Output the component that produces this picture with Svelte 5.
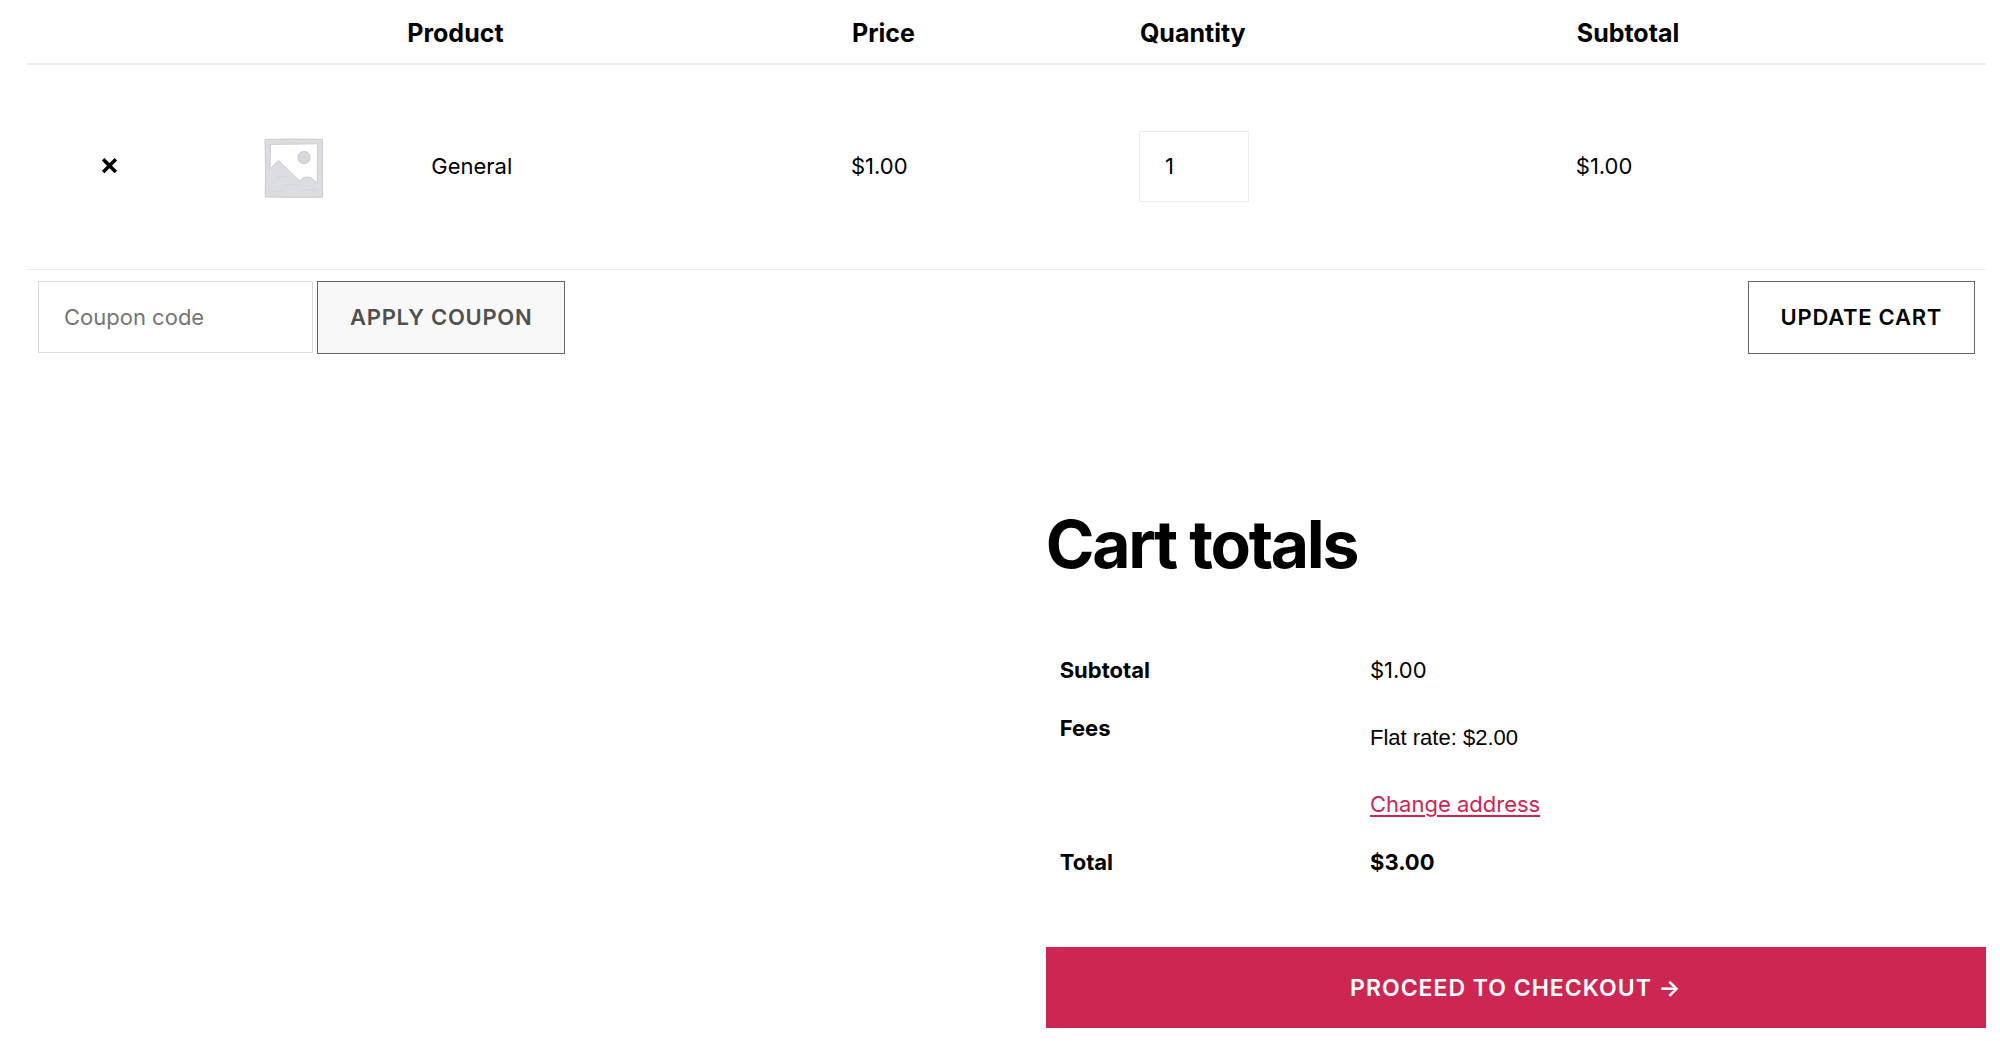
<script lang="ts">
	interface CartItem {
		id: number;
		name: string;
		price: number;
		quantity: number;
	}

	let items = $state<CartItem[]>([{ id: 1, name: 'General', price: 1, quantity: 1 }]);
	let coupon = $state('');
	const shipping = 2;

	const subtotal = $derived(items.reduce((sum, item) => sum + item.price * item.quantity, 0));

	function money(amount: number) {
		return '$' + amount.toFixed(2);
	}

	function removeItem(id: number) {
		items = items.filter(item => item.id !== id);
	}
</script>

<main class="cart">
	<form onsubmit={(e) => e.preventDefault()}>
		<table class="cart-table">
			<colgroup>
				<col class="col-remove" />
				<col class="col-thumb" />
				<col class="col-name" />
				<col class="col-price" />
				<col class="col-quantity" />
				<col />
			</colgroup>
			<thead>
				<tr>
					<td></td>
					<td></td>
					<th scope="col">Product</th>
					<th scope="col">Price</th>
					<th scope="col">Quantity</th>
					<th scope="col">Subtotal</th>
				</tr>
			</thead>
			<tbody>
				{#each items as item (item.id)}
					<tr class="item">
						<td class="remove">
							<button type="button" class="remove-btn" aria-label="Remove this item" onclick={() => removeItem(item.id)}>
								<svg width="16" height="16" viewBox="0 0 16 16" fill="none">
									<path d="M2.4 2.6L12.6 12.8M12.6 2.6L2.4 12.8" stroke="currentColor" stroke-width="3.6" stroke-linecap="square" stroke-linejoin="round" />
								</svg>
							</button>
						</td>
						<td class="thumb">
							<svg width="60" height="60" viewBox="0 0 60 60" fill="none">
								<path d="M1 1.4L30 1L58.6 1.4L58.3 30L58.6 59.2L30 59.4L1.2 58.9L1.6 30Z" fill="#dcdde1" stroke="#c9cacf" />
								<path d="M6.4 6.4L53.6 5.8L53.3 45L49.3 41.8C46 38.2 40.5 38.4 37.5 41.2L35.6 43.1L14.7 22.4L6 31Z" fill="#fff" stroke="#cbccd1" />
								<circle cx="40" cy="19.5" r="6" fill="#d7d8dc" stroke="#c5c6cb" />
								<path d="M12 41C15 37 20 40 24 38M19 48C26 44 31 49 39 46M39 54C43 50 49 53 54 51M5 54C11 51 16 55 21 53" stroke="#d7d8dc" stroke-width="2" />
							</svg>
						</td>
						<td class="name">{item.name}</td>
						<td>{money(item.price)}</td>
						<td>
							<input class="quantity" type="number" min="0" aria-label="{item.name} quantity" bind:value={item.quantity} />
						</td>
						<td>{money(item.price * item.quantity)}</td>
					</tr>
				{/each}
				<tr>
					<td colspan="6" class="actions">
						<div class="actions-row">
							<input class="coupon" type="text" placeholder="Coupon code" aria-label="Coupon code" bind:value={coupon} />
							<button type="submit" class="btn apply">Apply coupon</button>
							<button type="submit" class="btn update">Update cart</button>
						</div>
					</td>
				</tr>
			</tbody>
		</table>
	</form>

	<section class="totals">
		<h2>Cart totals</h2>
		<table class="totals-table">
			<tbody>
				<tr>
					<th scope="row">Subtotal</th>
					<td>{money(subtotal)}</td>
				</tr>
				<tr>
					<th scope="row">Fees</th>
					<td>
						<p class="rate">Flat rate: {money(shipping)}</p>
						<a href="#address">Change address</a>
					</td>
				</tr>
				<tr>
					<th scope="row">Total</th>
					<td><strong>{money(subtotal + shipping)}</strong></td>
				</tr>
			</tbody>
		</table>
		<a class="checkout" href="#checkout">Proceed to checkout →</a>
	</section>
</main>

<style>
	:global(body) {
		margin: 0;
		background: #fff;
	}

	.cart {
		padding: 0 14px 12px 27px;
		font-family: Inter, sans-serif;
		font-size: 22px;
		line-height: 34px;
		color: #000;
	}

	.cart * {
		box-sizing: border-box;
	}

	table {
		width: 100%;
		border-collapse: separate;
		border-spacing: 0;
		table-layout: fixed;
	}

	th,
	td {
		padding: 12px;
		text-align: left;
	}

	.col-remove {
		width: 8.5%;
	}

	.col-thumb {
		width: 10.3%;
	}

	.col-name {
		width: 22.7%;
	}

	.col-price {
		width: 14.7%;
	}

	.col-quantity {
		width: 22.3%;
	}

	thead th,
	thead td {
		padding: 16px 12px 13px;
		font-size: 25px;
		font-weight: 700;
		border-bottom: 2px solid #ececec;
	}

	.item td {
		height: 205px;
		padding: 0 12px 2px 11px;
		vertical-align: middle;
		border-bottom: 1px solid #ececec;
	}

	.item .remove,
	.item .thumb {
		text-align: center;
	}

	.item .thumb {
		padding-top: 4px;
	}

	.item .name {
		padding-left: 36px;
	}

	.item svg {
		display: block;
		margin: 0 auto;
	}

	.remove-btn {
		padding: 8px;
		border: none;
		background: none;
		color: #000;
		cursor: pointer;
	}

	input {
		display: block;
		padding: 0 25px;
		border: 1px solid #dcdcdc;
		border-radius: 0;
		background: #fff;
		color: #000;
		font-family: inherit;
		font-size: 22px;
	}

	input::placeholder {
		color: #757575;
		opacity: 1;
	}

	.quantity {
		width: 110px;
		height: 71px;
		border-color: #ececec;
		appearance: textfield;
		-moz-appearance: textfield;
	}

	.quantity::-webkit-inner-spin-button,
	.quantity::-webkit-outer-spin-button {
		appearance: none;
		margin: 0;
	}

	.actions {
		padding: 11px;
	}

	.actions-row {
		display: flex;
		align-items: flex-start;
		gap: 4px;
	}

	.coupon {
		width: 275px;
		height: 72px;
	}

	.btn {
		height: 73px;
		padding: 0 32px 2px;
		border: 1px solid #666;
		border-radius: 0;
		background: #fff;
		color: #000;
		font-family: inherit;
		font-size: 22px;
		font-weight: 600;
		letter-spacing: 0.0333em;
		text-transform: uppercase;
		cursor: pointer;
	}

	.apply {
		background: #f8f8f8;
		color: #505050;
	}

	.update {
		margin-left: auto;
	}

	.totals {
		width: 48%;
		margin: 139px 0 0 auto;
	}

	h2 {
		margin: 0 0 57px;
		font-size: 66px;
		font-weight: 700;
		line-height: 80px;
		letter-spacing: -0.035em;
	}

	.totals-table th,
	.totals-table td {
		padding: 12px 14px;
	}

	.totals-table th {
		width: 33%;
		font-weight: 700;
		vertical-align: top;
	}

	.totals-table .rate {
		margin: 10px 0 32px;
		font-family: "Liberation Sans", Arial, sans-serif;
	}

	.totals a {
		color: #cd2653;
		text-underline-offset: 3px;
	}

	.totals .checkout {
		display: block;
		margin-top: 56px;
		padding: 24px 32px 23px;
		background: #cd2653;
		color: #fff;
		font-size: 23px;
		font-weight: 600;
		letter-spacing: 1px;
		text-align: center;
		text-decoration: none;
		text-transform: uppercase;
	}
</style>
